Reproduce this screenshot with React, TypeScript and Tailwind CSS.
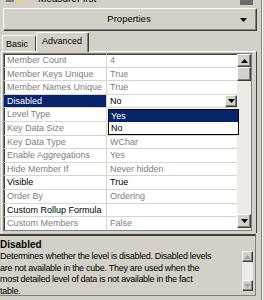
import React from 'react';

type Row = { name: string; value: string; dark?: boolean };

const rows: Row[] = [
  { name: 'Member Count', value: '4' },
  { name: 'Member Keys Unique', value: 'True' },
  { name: 'Member Names Unique', value: 'True' },
  { name: 'Disabled', value: 'No' },
  { name: 'Level Type', value: '' },
  { name: 'Key Data Size', value: '' },
  { name: 'Key Data Type', value: 'WChar' },
  { name: 'Enable Aggregations', value: 'Yes' },
  { name: 'Hide Member If', value: 'Never hidden' },
  { name: 'Visible', value: 'True', dark: true },
  { name: 'Order By', value: 'Ordering' },
  { name: 'Custom Rollup Formula', value: '', dark: true },
  { name: 'Custom Members', value: 'False' },
];

const raised =
  'border border-t-white border-l-white border-b-[#404040] border-r-[#404040] shadow-[inset_-1px_-1px_0_#808080] bg-[#d4d0c8]';

function Arrow({ up = false, color = '#000' }: { up?: boolean; color?: string }) {
  return (
    <svg width="7" height="4" viewBox="0 0 7 4">
      <polygon points={up ? '0,4 7,4 3.5,0' : '0,0 7,0 3.5,4'} fill={color} />
    </svg>
  );
}

function GridRow({ row }: { row: Row }) {
  const selected = row.name === 'Disabled';
  return (
    <div className="flex h-[13.6px] border-b border-[#d8d5ce] leading-[12.6px]">
      <div
        className={`w-[103px] shrink-0 border-r border-[#d8d5ce] pl-[3px] whitespace-nowrap overflow-hidden ${
          selected ? 'bg-[#0a246a] text-white' : row.dark ? 'text-black' : 'text-[#808080]'
        }`}
      >
        {row.name}
      </div>
      <div
        className={`flex-1 flex items-center pl-[3px] whitespace-nowrap overflow-hidden ${
          selected || row.dark ? 'text-black' : 'text-[#808080]'
        }`}
      >
        <span className="flex-1">{row.value}</span>
        {selected && (
          <span className={`${raised} w-[12px] h-[12px] flex items-center justify-center`}>
            <Arrow />
          </span>
        )}
      </div>
    </div>
  );
}

export default function App() {
  return (
    <div className="w-[264px] h-[300px] bg-[#d4d0c8] overflow-hidden flex font-['Liberation_Sans',Arial,sans-serif] text-[9px] text-black">
      <div className="w-[258px] flex flex-col">
        {/* clipped strip of the panel above */}
        <div className="h-[5px] overflow-hidden flex">
          <div className="flex items-center gap-[3px] -mt-[8px] h-[12px] pl-[6px] flex-1 text-[10px]">
            <span className="w-[8px] h-[8px] bg-[#808080]" />
            <span className="w-[8px] h-[8px] bg-[#e8d27a]" />
            <span className="ml-[10px]">MeasureFirst</span>
          </div>
          <div className="w-[13px] h-[5px] bg-[#6b6b6b] mr-[5px]" />
        </div>

        {/* Properties header */}
        <div className={`${raised} ml-[3px] mt-[3px] w-[254px] h-[23px] flex items-center`}>
          <span className="flex-1 text-center pl-[14px] text-[9.5px]">Properties</span>
          <span className="w-[16px] flex items-center">
            <Arrow />
          </span>
        </div>

        {/* tabs */}
        <div className="h-[19px] flex items-end pl-[2px] mt-[1px]">
          <div className="h-[16px] w-[34px] border-t border-l border-white border-r border-r-[#404040] pl-[3px] pt-[3px] leading-[10px] rounded-t-[2px]">
            Basic
          </div>
          <div className="relative z-10 -mb-[1px] h-[20px] w-[53px] bg-[#d4d0c8] border-t border-l border-white border-r border-r-[#404040] shadow-[inset_-1px_0_0_#808080] pl-[5px] pt-[3px] leading-[10px] rounded-t-[2px]">
            Advanced
          </div>
        </div>

        {/* tab page */}
        <div className="ml-[1px] w-[256px] h-[182px] border-t border-l border-white border-r border-r-[#404040] pt-[1px] pl-[1px]">
          <div className="relative w-[249px] h-[178px] border border-[#808080] shadow-[inset_1px_1px_0_#404040] bg-white flex overflow-hidden">
            <div className="flex-1 overflow-hidden">
              {rows.map((r) => (
                <GridRow key={r.name} row={r} />
              ))}
            </div>
            <div className="w-[14px] flex flex-col bg-[#ecebe6]">
              <div className={`${raised} h-[13px] flex items-center justify-center`}>
                <Arrow up />
              </div>
              <div className={`${raised} h-[14px]`} />
              <div className="flex-1" />
              <div className={`${raised} h-[14px] flex items-center justify-center mb-[2px]`}>
                <Arrow />
              </div>
            </div>

            {/* open dropdown */}
            <div className="absolute left-[104px] top-[55px] w-[131px] h-[26px] border border-black bg-white leading-[12px]">
              <div className="h-[12px] bg-[#0a246a] text-white pl-[2px]">Yes</div>
              <div className="h-[12px] pl-[2px]">No</div>
            </div>
          </div>
        </div>

        {/* description */}
        <div className="mt-[1px] w-[256px] h-[62px] border-t-2 border-t-[#404040] border-r border-r-[#808080] border-b border-b-[#808080] flex flex-col">
          <div className="font-bold text-[10px] leading-[13px] pt-[2px]">Disabled</div>
          <div className="flex">
            <div className="flex-1 leading-[11.7px] whitespace-nowrap tracking-[-0.28px]">
              <div>Determines whether the level is disabled. Disabled levels</div>
              <div>are not available in the cube. They are used when the</div>
              <div>most detailed level of data is not available in the fact</div>
              <div>table.</div>
            </div>
            <div className="w-[11px] h-[40px] mr-[2px] flex flex-col bg-[#ecebe6]">
              <div className={`${raised} h-[11px] flex items-center justify-center`}>
                <Arrow up color="#a0a0a0" />
              </div>
              <div className="flex-1" />
              <div className={`${raised} h-[11px] flex items-center justify-center`}>
                <Arrow color="#a0a0a0" />
              </div>
            </div>
          </div>
        </div>
      </div>

      {/* window edge */}
      <div className="ml-[3px] w-[1px] bg-[#808080]" />
      <div className="w-[1px] bg-white" />
    </div>
  );
}
